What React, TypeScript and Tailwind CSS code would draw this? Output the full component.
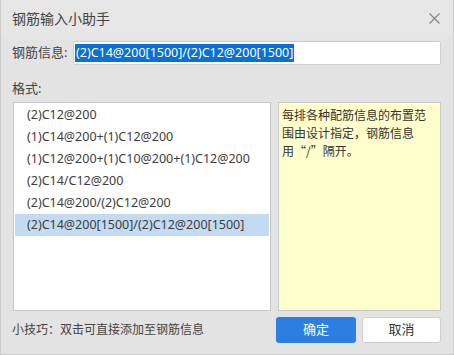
import { useState } from "react";

const formats = [
  "(2)C12@200",
  "(1)C14@200+(1)C12@200",
  "(1)C12@200+(1)C10@200+(1)C12@200",
  "(2)C14/C12@200",
  "(2)C14@200/(2)C12@200",
  "(2)C14@200[1500]/(2)C12@200[1500]",
];

export default function App() {
  const [selected, setSelected] = useState(5);
  const value = formats[selected];

  return (
    <div
      className="w-[454px] h-[355px] bg-[#e3e3e3] border border-t-0 border-[#c9c9c9] flex flex-col text-[#333] overflow-hidden"
      style={{ fontFamily: '"Noto Sans", "Noto Sans CJK SC", sans-serif' }}
    >
      {/* title bar */}
      <div className="h-[37px] flex items-center justify-between pl-[11px] pr-[13px] bg-[#e6e6e6]">
        <span className="text-[14px] text-[#444]">钢筋输入小助手</span>
        <svg width="11" height="11" viewBox="0 0 11 11" className="text-[#8a8a8a]">
          <path d="M0.5 0.5L10.5 10.5M10.5 0.5L0.5 10.5" stroke="currentColor" strokeWidth="1.3" />
        </svg>
      </div>

      {/* input row */}
      <div className="flex items-center pl-[11px] pr-[12px] mt-[4px]">
        <span className="text-[13px] w-[61px] text-[#444]">钢筋信息:</span>
        <div className="flex-1 h-[24px] bg-white border border-[#cfcfcf] rounded-[2px] flex items-center pl-[1px]">
          <span className="bg-[#0a6fd6] text-white text-[12.5px] leading-[18px] px-[1px]">{value}</span>
        </div>
      </div>

      <div className="pl-[11px] mt-[14px] text-[13px] text-[#444] leading-[18px]">格式:</div>

      {/* list + note */}
      <div className="flex gap-[7px] pl-[12px] pr-[12px] mt-[5px] h-[209px]">
        <div className="w-[258px] bg-white border border-[#c8c8c8] py-[1px] px-[1px] text-[12.5px]">
          {formats.map((f, i) => (
            <div
              key={f}
              onClick={() => setSelected(i)}
              className={`h-[22px] leading-[22px] pl-[12px] text-[#3d3d3d] ${i === selected ? "bg-[#c3dbf2]" : ""}`}
            >
              {f}
            </div>
          ))}
        </div>
        <div
          className="flex-1 bg-[#ffffcc] border border-[#c8c8c8] px-[3px] pt-[3px] text-[12px] leading-[18px] text-[#333]"
          style={{ fontFamily: '"Noto Sans CJK SC", sans-serif' }}
        >
          每排各种配筋信息的布置范围由设计指定，钢筋信息用“/”隔开。
        </div>
      </div>

      {/* footer */}
      <div className="flex items-center pl-[11px] pr-[12px] mt-[6px]">
        <span className="flex-1 text-[12px] text-[#444]">小技巧：双击可直接添加至钢筋信息</span>
        <button className="w-[80px] h-[26px] rounded-[3px] bg-[#2b7fe0] text-white text-[13px]">确定</button>
        <button className="w-[79px] h-[26px] ml-[6px] rounded-[3px] bg-white border border-[#cfcfcf] text-[13px] text-[#333]">取消</button>
      </div>
    </div>
  );
}
